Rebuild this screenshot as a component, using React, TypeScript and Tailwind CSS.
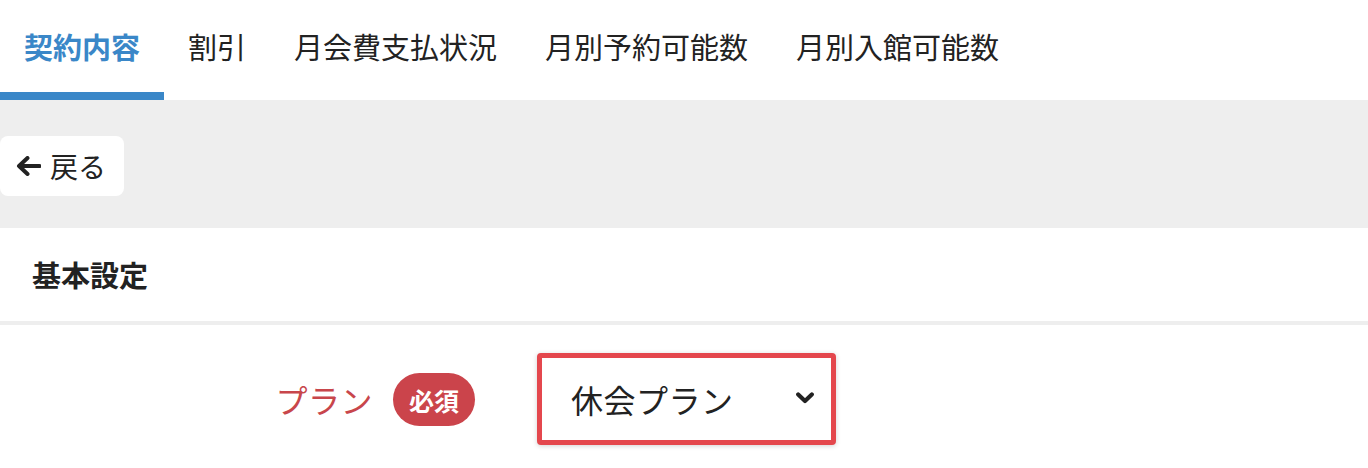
import React from "react";

const tabs = ["契約内容", "割引", "月会費支払状況", "月別予約可能数", "月別入館可能数"];

export default function App() {
  return (
    <div
      className="w-[1368px] h-[468px] bg-white overflow-hidden text-[#222]"
      style={{ fontFamily: '"Noto Sans CJK JP", "Noto Sans", sans-serif' }}
    >
      {/* Tabs */}
      <div className="flex h-[100px] bg-white">
        {tabs.map((t, i) => (
          <div
            key={t}
            className={
              i === 0
                ? "flex items-center px-[24px] border-b-[8px] border-[#3a87c8] text-[#3a87c8] font-bold text-[29px] leading-none"
                : "flex items-center px-[24px] border-b-[8px] border-transparent text-[#222] text-[29px] leading-none"
            }
          >
            <span className="pt-[1px]">{t}</span>
          </div>
        ))}
      </div>

      {/* Gray area with back button */}
      <div className="bg-[#eeeeee] h-[128px] pt-[36px]">
        <button className="flex items-center w-[124px] h-[60px] bg-white rounded-[8px] pl-[16px] gap-[9px] text-[28px] leading-none text-[#222]">
          <svg width="25" height="20" viewBox="0 0 25 20" fill="none">
            <path d="M23.5 10H4" stroke="#222" strokeWidth="4" strokeLinecap="round" />
            <path d="M11.5 2L3 10L11.5 18" stroke="#222" strokeWidth="4" strokeLinecap="round" strokeLinejoin="round" />
          </svg>
          <span>戻る</span>
        </button>
      </div>

      {/* Section header */}
      <div className="h-[93px] flex items-center pl-[32px] bg-white">
        <span className="font-bold text-[29px] leading-none text-[#222]">基本設定</span>
      </div>
      <div className="h-[4px] bg-[#eeeeee]" />

      {/* Form row */}
      <div className="flex items-center mt-[28px]">
        <div className="w-[475px] flex items-center justify-end gap-[20px]">
          <span className="text-[32px] leading-none text-[#c8464b] tracking-[0.5px]">プラン</span>
          <span className="w-[82px] h-[53px] rounded-full bg-[#cb444b] text-white font-bold text-[25px] leading-none flex items-center justify-center pt-[2px]">
            必須
          </span>
        </div>
        <div className="ml-[62px] w-[299px] h-[92px] border-[5px] border-[#e4474d] rounded-[4px] shadow-[0_1px_5px_rgba(0,0,0,0.18)] bg-white flex items-center justify-between pl-[29px] pr-[17px]">
          <span className="text-[32px] leading-none text-[#222] tracking-[0.5px]">休会プラン</span>
          <svg width="18" height="12" viewBox="0 0 18 12" fill="none" className="mt-[-2px]">
            <path d="M2.2 2.5L9 9L15.8 2.5" stroke="#222" strokeWidth="4.2" strokeLinecap="round" strokeLinejoin="round" />
          </svg>
        </div>
      </div>
    </div>
  );
}
